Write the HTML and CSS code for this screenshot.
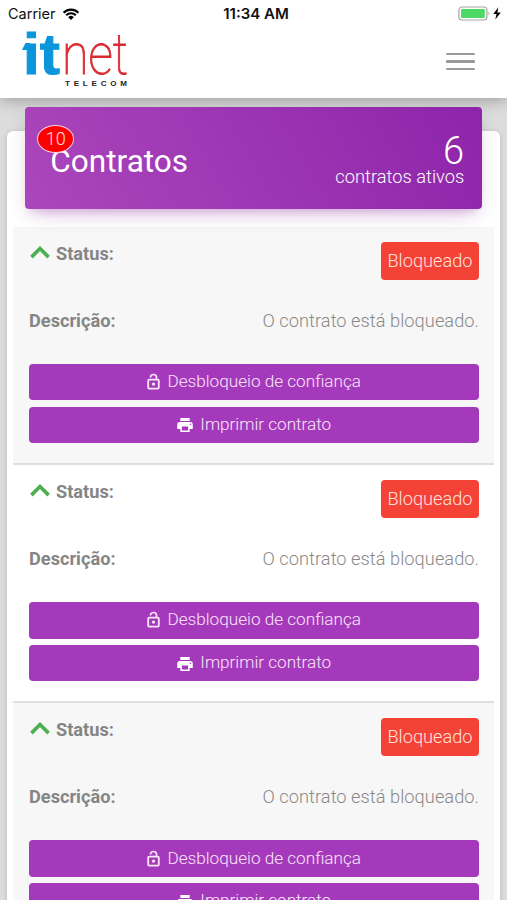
FILE: index.html
```html
<!DOCTYPE html>
<html lang="pt-BR">
<head>
<meta charset="utf-8">
<meta name="viewport" content="width=device-width">
<title>Contratos</title>
<link rel="stylesheet" href="styles.css">
</head>
<body>
<svg class="sprite" aria-hidden="true">
  <symbol id="up" viewBox="0 0 20 14"><path d="M2 11.3 10 3.3l8 8" fill="none" stroke="#4caf50" stroke-width="3.4"/></symbol>
  <symbol id="lock" viewBox="0 0 13 17"><rect x="1.2" y="6.6" width="10.6" height="9" rx="1" fill="none" stroke="currentColor" stroke-width="1.8"/><path d="M3.4 4.3C3.6 2.5 5 1.5 6.5 1.5s3 1.1 3 2.8V7" fill="none" stroke="currentColor" stroke-width="1.7"/><circle cx="6.5" cy="11.1" r="1.7" fill="currentColor"/></symbol>
  <symbol id="print" viewBox="2 3 20 18"><path fill="currentColor" d="M19 8H5c-1.66 0-3 1.34-3 3v6h4v4h12v-4h4v-6c0-1.66-1.34-3-3-3zm-3 11H8v-5h8v5zm3-7c-.55 0-1-.45-1-1s.45-1 1-1 1 .45 1 1-.45 1-1 1zm-1-9H6v4h12V3z"/></symbol>
</svg>
<header class="topbar">
  <div class="statusbar">
    <div class="carrier"><span>Carrier</span>
      <svg class="wifi" viewBox="0 0 17 12"><g fill="none" stroke="#000" stroke-width="2.1"><path d="M1.1 4.7a10.5 10.5 0 0 1 14.8 0"/><path d="M3.7 7.3a6.8 6.8 0 0 1 9.6 0"/></g><path d="M8.5 12 5.7 9.2a4 4 0 0 1 5.6 0z"/></svg>
    </div>
    <div class="clock">11:34 AM</div>
    <svg class="battery" viewBox="0 0 44 16"><rect x=".9" y="1" width="28" height="13" rx="3" fill="#fff" stroke="#a5a5a5" stroke-width="1.2"/><rect x="3" y="3" width="23.8" height="9" rx="1" fill="#4cd964"/><path d="M30.5 5.5q2 2 0 4z" fill="#a5a5a5"/><path d="m40.3 1.3-5 6.6h3.2l-1.2 5.6 5.5-7h-3.4z"/></svg>
  </div>
  <div class="nav">
    <svg class="logo" viewBox="0 0 108 56" role="img" aria-label="itnet Telecom">
      <text class="logo-it" x="3" y="42.5" textLength="37" lengthAdjust="spacingAndGlyphs">it</text>
      <path class="logo-flag" d="m2 19 3.5-7H10v7z"/>
      <text class="logo-net" x="42" y="42.5" textLength="66" lengthAdjust="spacingAndGlyphs">net</text>
      <text class="logo-sub" x="45" y="54.5" textLength="62" lengthAdjust="spacing">TELECOM</text>
    </svg>
    <button class="menu" aria-label="Menu"><i></i><i></i><i></i></button>
  </div>
</header>
<main class="card">
  <section class="hero">
    <h1>Contratos<span class="count">10</span></h1>
    <div class="total"><strong>6</strong><span>contratos ativos</span></div>
  </section>
  <article class="row">
    <div class="line"><b class="status"><svg><use href="#up"/></svg>Status:</b><span class="badge">Bloqueado</span></div>
    <div class="desc"><b>Descrição:</b><span>O contrato está bloqueado.</span></div>
    <button class="btn"><svg class="lock"><use href="#lock"/></svg><span>Desbloqueio de confiança</span></button>
    <button class="btn"><svg class="print"><use href="#print"/></svg><span>Imprimir contrato</span></button>
  </article>
  <article class="row">
    <div class="line"><b class="status"><svg><use href="#up"/></svg>Status:</b><span class="badge">Bloqueado</span></div>
    <div class="desc"><b>Descrição:</b><span>O contrato está bloqueado.</span></div>
    <button class="btn"><svg class="lock"><use href="#lock"/></svg><span>Desbloqueio de confiança</span></button>
    <button class="btn"><svg class="print"><use href="#print"/></svg><span>Imprimir contrato</span></button>
  </article>
  <article class="row">
    <div class="line"><b class="status"><svg><use href="#up"/></svg>Status:</b><span class="badge">Bloqueado</span></div>
    <div class="desc"><b>Descrição:</b><span>O contrato está bloqueado.</span></div>
    <button class="btn"><svg class="lock"><use href="#lock"/></svg><span>Desbloqueio de confiança</span></button>
    <button class="btn"><svg class="print"><use href="#print"/></svg><span>Imprimir contrato</span></button>
  </article>
</main>
</body>
</html>
```
FILE: styles.css
```css
* { box-sizing: border-box; }
body { margin: 0; height: 900px; overflow: hidden; background: #dcdcdc; font: 300 18.2px/24px Roboto, sans-serif; color: #888; }
.sprite { position: absolute; width: 0; height: 0; }
button { border: 0; font: inherit; }
.topbar { position: relative; height: 98px; background: #fff; box-shadow: 0 2px 14px rgba(0,0,0,.3); }
.statusbar { display: grid; grid-template-columns: 1fr auto 1fr; align-items: center; height: 27px; padding: 0 5px 0 8px; font: 400 14.5px/27px Inter, sans-serif; color: #111; }
.carrier { display: flex; align-items: center; gap: 6px; }
.wifi { width: 18px; height: 12px; }
.clock { font-size: 15px; font-weight: 600; padding-left: 2px; }
.battery { width: 44px; height: 16px; justify-self: end; }
.nav { display: flex; justify-content: space-between; align-items: flex-start; padding: 4px 32px 0 20px; }
.logo { width: 108px; height: 56px; overflow: visible; }
.logo-it { font: 700 57px "Liberation Sans", sans-serif; fill: #0b96dc; stroke: #0b96dc; stroke-width: 1px; }
.logo-flag { fill: #0b96dc; }
.logo-net { font: 100 58px Roboto, sans-serif; fill: #d92c32; stroke: #d92c32; stroke-width: 1px; }
.logo-sub { font: 700 8px "Liberation Sans Narrow", "Liberation Sans", sans-serif; fill: #222; }
.menu { display: flex; flex-direction: column; gap: 5px; width: 29px; padding: 0; margin-top: 22px; background: none; }
.menu i { height: 2.4px; background: #999; border-radius: 1px; }
.card { width: 493px; height: 850px; margin: 33px auto 0; padding: 0 6px; background: #fff; border-radius: 6px; box-shadow: 0 1px 5px rgba(0,0,0,.16); }
.hero { position: relative; display: flex; justify-content: space-between; height: 102px; width: 457px; top: -24px; margin: 0 auto -6px 12.2px; padding: 26px 18px 0 25px; color: #fff; border-radius: 4px; background: linear-gradient(60deg, #ab47bc, #8e24aa); box-shadow: 0 12px 20px -10px rgba(156,39,176,.28), 0 4px 20px rgba(0,0,0,.07), 0 7px 8px -5px rgba(156,39,176,.2); }
h1 { position: relative; margin: 10px 0 0; height: 40px; font-size: 31.6px; line-height: 38px; font-weight: 400; }
.count { position: absolute; left: -13px; top: -18px; width: 37px; height: 28px; border: 1.5px solid #f6cde5; border-radius: 50%; background: #f00; font: 300 18px/26px Roboto, sans-serif; text-align: center; color: #ffe1df; }
.total { display: flex; flex-direction: column; align-items: flex-end; line-height: 22px; }
.total strong { font-size: 38px; line-height: 36px; font-weight: 300; }
.total span { margin-top: -3px; font-size: 18.3px; }
.row { height: 238.2px; padding: 15px 15px 0 16px; border-bottom: 2px solid #dfdfdf; background: #fff; }
.row:nth-of-type(odd) { background: #f7f7f7; }
.line { display: flex; justify-content: space-between; height: 67px; }
.status { display: flex; align-items: center; height: 24px; gap: 5px; }
.status svg { width: 22px; height: 15px; margin-top: -3px; }
b { font-weight: 700; color: #858585; }
.badge { width: 98px; height: 38px; border-radius: 4px; background: #f44336; color: #ffe1df; line-height: 37px; text-align: center; }
.desc { display: flex; justify-content: space-between; height: 54.9px; }
.desc span { letter-spacing: .06px; }
.btn { display: flex; justify-content: center; align-items: center; width: 100%; height: 36.5px; margin-bottom: 6.2px; padding: 0 0 2px; border-radius: 4px; background: #a43abb; color: #fbe6fa; gap: 7.5px; font-size: 17.15px; }
.lock { width: 13px; height: 17px; margin-top: 1px; }
.print { width: 16px; height: 14px; margin-top: 3px; color: #fff; }
```
